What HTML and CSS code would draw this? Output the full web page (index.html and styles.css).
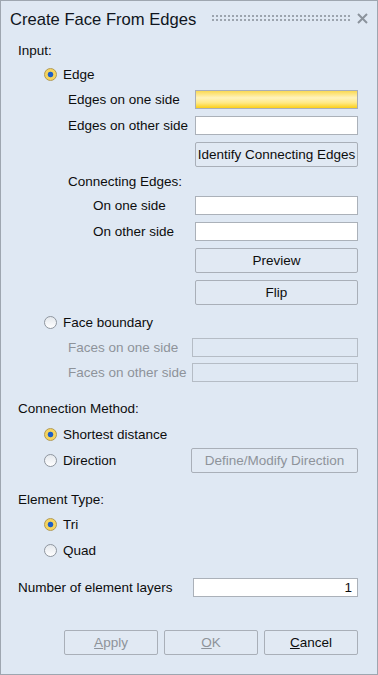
FILE: index.html
```html
<!DOCTYPE html>
<html lang="en">
<head>
<meta charset="UTF-8">
<meta name="viewport" content="width=device-width, initial-scale=1.0">
<title>Create Face From Edges</title>
<link rel="stylesheet" href="styles.css">
</head>
<body>

<div class="dialog">
    <div class="titlebar">
        <span class="title">Create Face From Edges</span>
        <span class="grip"></span>
        <svg class="close" width="11" height="11" viewBox="0 0 11 11">
            <path d="M1 1 L10 10 M10 1 L1 10" stroke="#8b939c" stroke-width="2" fill="none"/>
        </svg>
    </div>

    <div class="heading h-input">Input:</div>
    <div class="option o-edge"><span class="radio on"></span>Edge</div>

    <div class="row r-first">
        <span class="label">Edges on one side</span>
        <span class="input active"></span>
    </div>
    <div class="row">
        <span class="label">Edges on other side</span>
        <span class="input"></span>
    </div>
    <div class="row btn-row">
        <button class="btn">Identify Connecting Edges</button>
    </div>

    <div class="subheading">Connecting Edges:</div>
    <div class="row r-tight">
        <span class="label sub">On one side</span>
        <span class="input"></span>
    </div>
    <div class="row">
        <span class="label sub">On other side</span>
        <span class="input"></span>
    </div>
    <div class="row btn-row">
        <button class="btn">Preview</button>
    </div>
    <div class="row btn-row">
        <button class="btn">Flip</button>
    </div>

    <div class="option o-face"><span class="radio"></span>Face boundary</div>
    <div class="row r-face">
        <span class="label disabled">Faces on one side</span>
        <span class="input off wide"></span>
    </div>
    <div class="row r-face">
        <span class="label disabled">Faces on other side</span>
        <span class="input off wide"></span>
    </div>

    <div class="heading h-section">Connection Method:</div>
    <div class="option o-first"><span class="radio on"></span>Shortest distance</div>
    <div class="row btn-row r-dir">
        <span class="option inline"><span class="radio"></span>Direction</span>
        <button class="btn off wider">Define/Modify Direction</button>
    </div>

    <div class="heading h-section">Element Type:</div>
    <div class="option o-tri"><span class="radio on"></span>Tri</div>
    <div class="option o-quad"><span class="radio"></span>Quad</div>

    <div class="row r-layers">
        <span class="plain">Number of element layers</span>
        <span class="input number">1</span>
    </div>

    <div class="actions">
        <button class="btn small off"><u>A</u>pply</button>
        <button class="btn small off"><u>O</u>K</button>
        <button class="btn small"><u>C</u>ancel</button>
    </div>
</div>

</body>
</html>
```

FILE: styles.css
```css
body {
    margin: 0;
    font-family: "Liberation Sans", Arial, sans-serif;
    font-size: 13.5px;
    color: #0d0d0d;
    background-color: #fff;
}

.dialog {
    width: 378px;
    height: 675px;
    box-sizing: border-box;
    border: 1px solid #9ea6b0;
    background-color: #dfe8f3;
    padding: 0 19px 0 17px;
}

/* title bar */
.titlebar {
    display: flex;
    height: 40px;
    margin: 0 -19px 0 -17px;
    padding: 0 9px;
}

.title {
    font-size: 16.6px;
    line-height: 37px;
    color: #0f1520;
}

.grip {
    flex: 1;
    height: 6px;
    margin: 14px 7px 0 14px;
    background:
        linear-gradient(90deg, #dfe8f3 2px, transparent 2px) 0 0 / 4px 4px,
        linear-gradient(#9ca4ae 2px, transparent 2px) 0 0 / 4px 4px;
}

.close {
    margin-top: 12px;
}

/* headings */
.heading {
    height: 20px;
    line-height: 20px;
}

.h-section {
    margin-top: 17px;
}

.subheading {
    height: 20px;
    line-height: 20px;
    padding-left: 50px;
    margin-top: 5px;
}

/* radio options */
.option {
    display: flex;
    align-items: center;
    height: 20px;
    padding-left: 26px;
}

.option.inline {
    padding-left: 26px;
}

.o-edge { margin-top: 3px; }
.o-face { margin-top: 7px; }
.o-first { margin-top: 5px; }
.o-tri { margin-top: 4px; }
.o-quad { margin-top: 6px; }

.radio {
    width: 13px;
    height: 13px;
    box-sizing: border-box;
    border-radius: 50%;
    border: 1px solid #8f969f;
    background: linear-gradient(#e4e8ed, #ffffff);
    margin-right: 6px;
    flex-shrink: 0;
}

.radio.on {
    border-color: #b39a52;
    background: radial-gradient(circle, #1d5ec6 0 2.4px, #f5d45e 3.2px);
}

/* field rows */
.row {
    display: flex;
    align-items: center;
    height: 19px;
    margin-top: 7px;
}

.r-first { margin-top: 6px; }
.r-tight { margin-top: 4px; }
.r-face { margin-top: 6px; }
.r-dir { margin-top: 4px; }
.r-layers { margin-top: 18px; }

.btn-row {
    height: 25px;
}

.label {
    padding-left: 50px;
}

.label.sub {
    padding-left: 75px;
}

.disabled {
    color: #8e939a;
}

.input {
    margin-left: auto;
    width: 163px;
    height: 19px;
    box-sizing: border-box;
    border: 1px solid #abb1b9;
    background-color: #fff;
}

.input.active {
    border-color: #a9aeb6;
    background: linear-gradient(#fbd952, #fff3bd 40%, #ffe984 70%, #fbcf18);
}

.input.off {
    border-color: #b5bcc5;
    background-color: transparent;
}

.input.wide {
    width: 166px;
}

.input.number {
    width: 165px;
    text-align: right;
    padding-right: 5px;
    line-height: 17px;
}

.btn {
    margin-left: auto;
    width: 163px;
    height: 25px;
    box-sizing: border-box;
    border: 1px solid #a9afb8;
    border-radius: 2px;
    background-color: #e1e9f3;
    font-family: inherit;
    font-size: 13.5px;
    color: #0d0d0d;
    padding: 0;
}

.btn.off {
    color: #8e939a;
}

.btn.wider {
    width: 167px;
}

.actions {
    display: flex;
    justify-content: flex-end;
    gap: 6px;
    margin-top: 33px;
}

.btn.small {
    margin-left: 0;
    width: 94px;
}
```
